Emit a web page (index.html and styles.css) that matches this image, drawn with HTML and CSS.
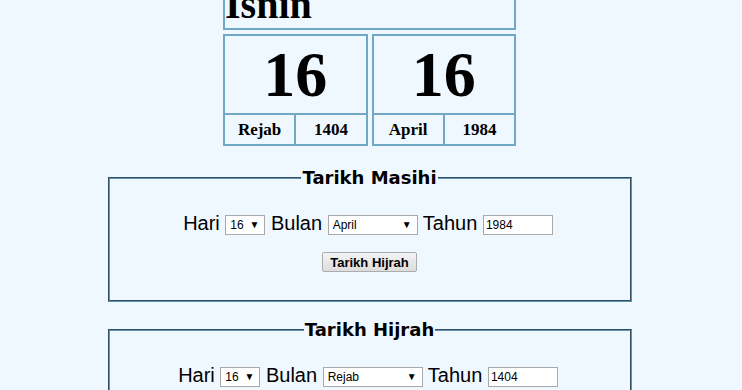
FILE: index.html
```html
<!DOCTYPE html>
<html lang="ms">
<head>
  <meta charset="UTF-8" />
  <meta name="viewport" content="width=device-width, initial-scale=1" />
  <title>Tarikh Hijrah</title>
  <link rel="stylesheet" href="styles.css">
</head>
<body>
  <div class="kalendar">
    <div class="hari-box">Isnin</div>
    <div class="kad-row">
      <div class="kad">
        <div class="nombor">16</div>
        <div class="kad-bawah">
          <div class="sel">Rejab</div>
          <div class="sel">1404</div>
        </div>
      </div>
      <div class="kad">
        <div class="nombor">16</div>
        <div class="kad-bawah">
          <div class="sel">April</div>
          <div class="sel">1984</div>
        </div>
      </div>
    </div>
  </div>

  <fieldset class="borang">
    <legend>Tarikh Masihi</legend>
    <div class="baris">
      Hari <span class="pilih"><select class="hari"><option>16</option></select></span>
      Bulan <span class="pilih"><select class="bulan-m"><option>April</option></select></span>
      Tahun <input type="text" class="tahun" value="1984" />
    </div>
    <div class="tindakan">
      <button>Tarikh Hijrah</button>
    </div>
  </fieldset>

  <fieldset class="borang">
    <legend>Tarikh Hijrah</legend>
    <div class="baris">
      Hari <span class="pilih"><select class="hari"><option>16</option></select></span>
      Bulan <span class="pilih"><select class="bulan-h"><option>Rejab</option></select></span>
      Tahun <input type="text" class="tahun" value="1404" />
    </div>
    <div class="tindakan">
      <button>Tarikh Masihi</button>
    </div>
  </fieldset>
</body>
</html>
```

FILE: styles.css
```css
body {
  margin: 0;
  padding: 0 3px 0 0;
  background-color: #f0f8ff;
  color: #000;
  font-family: "Liberation Sans", Arial, sans-serif;
}
.kalendar {
  width: 293px;
  margin: -20px auto 0;
  font-family: "Liberation Serif", "Times New Roman", serif;
  font-weight: bold;
}
.hari-box {
  border: 2px solid #71a8c6;
  font-size: 40px;
  line-height: 46px;
}
.kad-row {
  display: flex;
  gap: 4px;
  margin-top: 4px;
}
.kad {
  flex: 1;
  border: 2px solid #71a8c6;
}
.nombor {
  height: 77px;
  line-height: 77px;
  font-size: 64px;
  text-align: center;
  border-bottom: 2px solid #71a8c6;
}
.kad-bawah {
  display: flex;
}
.sel {
  flex: 1;
  height: 29px;
  line-height: 29px;
  font-size: 17px;
  text-align: center;
}
.sel + .sel {
  border-left: 2px solid #71a8c6;
}
.borang {
  width: 524px;
  margin: 21px auto 0;
  padding: 0 0 28px;
  border: 2px groove #5e93b3;
  text-align: center;
  box-sizing: border-box;
}
.borang + .borang {
  margin-top: 17px;
}
.borang legend {
  padding: 0 1px;
  font-family: "DejaVu Sans", Verdana, sans-serif;
  font-weight: bold;
  font-size: 18px;
}
.baris {
  margin-top: 23px;
  padding-right: 3px;
  font-size: 20px;
  line-height: 24px;
}
.pilih {
  position: relative;
  display: inline-block;
  vertical-align: middle;
}
.pilih::after {
  content: "\25BC";
  position: absolute;
  right: 6px;
  top: 5px;
  font-size: 10px;
  line-height: 10px;
  pointer-events: none;
}
select {
  appearance: none;
  -webkit-appearance: none;
  height: 20px;
  margin: 0;
  padding: 0 0 0 4px;
  border: 1px solid #a9a9a9;
  border-radius: 0;
  background: #fff;
  font-family: "Liberation Sans", Arial, sans-serif;
  font-size: 12px;
  color: #000;
  display: block;
}
.hari {
  width: 40px;
}
.bulan-m {
  width: 90px;
}
.bulan-h {
  width: 100px;
}
.tahun {
  width: 70px;
  height: 20px;
  margin: 0;
  padding: 0 2px;
  border: 1px solid #a9a9a9;
  box-sizing: border-box;
  font-family: "Liberation Sans", Arial, sans-serif;
  font-size: 12px;
  vertical-align: middle;
}
.tindakan {
  margin-top: 17px;
}
button {
  height: 20px;
  padding: 0 7px;
  border: 1px solid #acacac;
  border-radius: 2px;
  background: linear-gradient(#f4f4f4, #dcdcdc);
  font-family: "Liberation Sans", Arial, sans-serif;
  font-size: 13px;
  font-weight: bold;
  color: #000;
}
```
